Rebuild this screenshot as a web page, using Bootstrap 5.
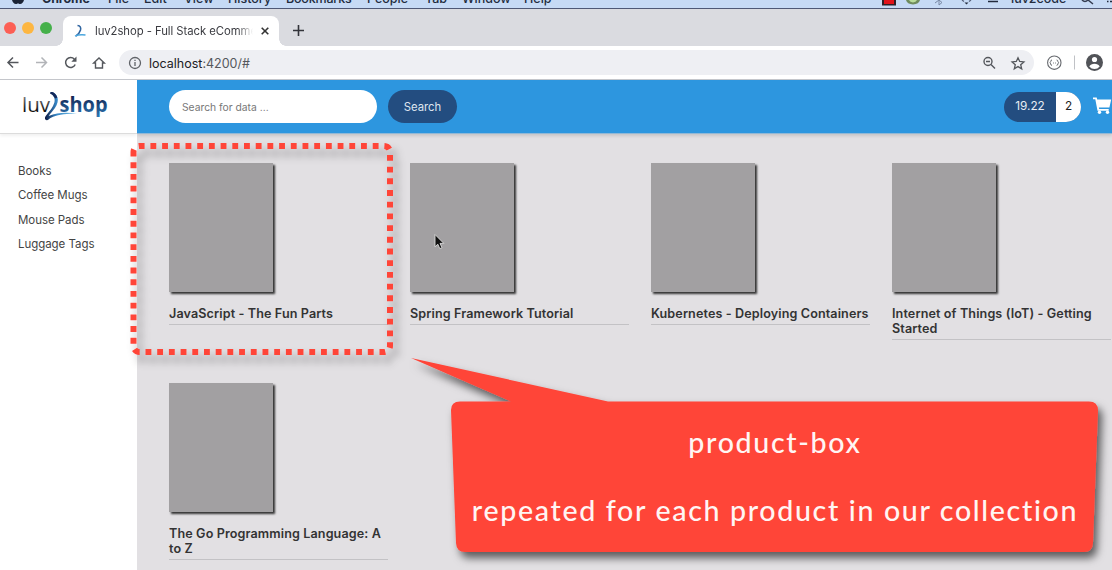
<!DOCTYPE html>
<html lang="en">
<head>
<meta charset="utf-8">
<title>luv2shop - Full Stack eCommerce</title>
<link href="https://cdn.jsdelivr.net/npm/bootstrap@5.3.0/dist/css/bootstrap.min.css" rel="stylesheet">
<style>
body{width:1112px;height:570px;overflow:hidden;font-family:Inter,"Liberation Sans",sans-serif;background:#fff;color:#333}
svg{display:block;flex:none}
.menu-strip{height:9px;background:#c6daf5;border-bottom:1px solid #4e5876;font-size:12.5px;font-weight:500;line-height:16px;color:#222b3d;padding-left:11px}
.menu-strip span{height:16px;margin-bottom:1px;white-space:nowrap;flex:none}
.w-chrome{width:66px;font-weight:700;letter-spacing:-.1px}.w-file{width:36px}.w-edit{width:40px}.w-view{width:44px}.w-history{width:58px}
.w-book{width:81px;letter-spacing:-.2px}.w-people{width:58px}.w-tab{width:37px}.w-window{width:62px}.w-help{width:357px}
.tab-strip{height:37px;background:#dadbe0;padding-left:4px}
.light{width:12px;height:12px;border-radius:50%;margin-right:6px;margin-top:1px}
.light-r{background:#fc5f55}.light-y{background:#fdb641}.light-g{background:#45b04a}
.tab-cur{height:30px;width:216px;background:#fff;border-radius:8px 8px 0 0;margin-left:5px;padding:0 8px 0 10px;font-size:11.3px;color:#3a3b40}
.tab-cur:before,.tab-cur:after{content:"";position:absolute;bottom:0;width:7px;height:7px}
.tab-cur:before{left:-7px;background:radial-gradient(circle at 0 0,transparent 6.5px,#fff 7px)}
.tab-cur:after{right:-7px;background:radial-gradient(circle at 100% 0,transparent 6.5px,#fff 7px)}
.tab-label{width:158px;overflow:hidden;white-space:nowrap;letter-spacing:-.05px;-webkit-mask-image:linear-gradient(90deg,#000 90%,transparent 100%)}
.tools{height:34px;border-bottom:1px solid #c4c6cb;padding-left:5px}
.address{width:915px;height:25px;border-radius:13px;background:#eeeff3;padding:0 8px 0 9px;font-size:12.5px;color:#55585d}
.address b{font-weight:400;color:#202124}
.shop{height:490px}
.side{width:137px}
.brand{height:54px;border-bottom:1px solid #dcdcdc;box-shadow:0 2px 3px rgba(0,0,0,.06);padding:10px 0 0 22px}
.cats{padding:25px 0 0 18px;font-size:11.5px;line-height:24.3px;color:#444;letter-spacing:-.05px}
.main{width:975px;background:#e2e0e3;overflow:hidden}
.topbar{height:54px;background:#2d96df;padding:0 0 0 32px;border-bottom:1px solid #92b8d6;box-shadow:0 2px 3px rgba(0,0,0,.12)}
.topbar .form-control{width:208px;height:33px;border:0;border-radius:17px;font-size:10.3px;padding:0 13px;color:#777}
.topbar .form-control::placeholder{color:#777;opacity:1}
.topbar .btn{width:69px;height:33px;border-radius:17px;background:#234d80;color:#dfe6ef;font-size:11.3px;padding:2px 0 0;margin-left:11px;border:0}
.total{height:30px;width:77px;border-radius:15px;overflow:hidden;font-size:11.8px;background:#234d80;color:#e8edf4}
.total .qty{width:25px;height:30px;background:#fff;color:#222}
.total .sum{width:52px}
.grid-area{width:964px;margin:29px 0 0 32px}
.product{height:220px;padding-right:22px}
.cover{width:104px;height:129px;background:#a2a0a2;box-shadow:2px 2px 2px #333}
.product h6{font-size:12.6px;line-height:15px;font-weight:600;letter-spacing:.11px;color:#333;margin:14px -4px 0 0;padding:0 0 3px}
.product h6:after{content:"";display:block;width:219px;height:1px;margin-top:3px;margin-bottom:-4px;background:#c3c2c5}
.note{left:451px;top:400px;width:648px;height:151px;color:#fff5f3;font-family:Lato,sans-serif;font-size:28.6px;font-weight:500;line-height:68px;padding-top:8px;letter-spacing:1.65px;white-space:nowrap}
.over{left:0;top:0}
</style>
</head>
<body class="position-relative">
<div class="menu-strip d-flex align-items-end overflow-hidden">
  <svg width="31" height="8" viewBox="0 0 31 8"><path d="M1 0h12c-.5 2-2 4-4 4-1 0-1-.5-2-.5S6 4 5 4C3 4 1.500 2 1 0z" fill="#1b2436"/></svg>
  <span class="w-chrome">Chrome</span><span class="w-file">File</span><span class="w-edit">Edit</span><span class="w-view">View</span><span class="w-history">History</span><span class="w-book">Bookmarks</span><span class="w-people">People</span><span class="w-tab">Tab</span><span class="w-window">Window</span><span class="w-help">Help</span>
  <svg width="130" height="8" viewBox="881 0 130 8"><path d="M882 0h14v5.500h-14z" fill="#302028"/><path d="M884 0h10v4h-10z" fill="#e2131b"/><path d="M906 0h14q-1 4-7 4.500-6-.5-7-4.500z" fill="#6f8b5d"/><path d="M909 0h8q-1 2-4 2.500-3-.5-4-2.500z" fill="#b9dc9a"/><path d="M935 3l4-3 3 2.500-3 2.500v-5" fill="none" stroke="#7888a4"/><path d="M962 0l2 1.500M971 0l-2 1.500" stroke="#55617a" stroke-width="1.200"/><path d="M964.500 2.500h4l-2 2z" fill="#222b3d"/><path d="M988 1.500h10" stroke="#222b3d" stroke-width="1.500"/></svg>
  <span>luv2code</span>
  <svg width="47" height="8" viewBox="1065 0 47 8"><path d="M1081 0q3 3 6 0M1087 0l5 4" fill="none" stroke="#343d51" stroke-width="1.500"/><path d="M1106 1.500h1.500M1109 1.500h3" stroke="#222b3d" stroke-width="1.500"/></svg>
</div>

<div class="tab-strip d-flex align-items-center">
  <div class="light light-r"></div><div class="light light-y"></div><div class="light light-g"></div>
  <div class="tab-cur d-flex align-items-center position-relative align-self-end">
    <svg width="22" height="16" viewBox="0 0 22 16"><path d="M4.500 2.500q4 .5 3 4.500Q6.500 10.500 3 13" fill="none" stroke="#2f64a0" stroke-width="1.600"/><path d="M2 13.200q4-2 10.500-1.200" fill="none" stroke="#4aa6de" stroke-width="1.300"/></svg>
    <div class="tab-label">luv2shop - Full Stack eCommerce</div>
    <svg class="ms-auto" width="12" height="12" viewBox="0 0 12 12"><path d="M2.700 2.700l6.600 6.600M9.300 2.700l-6.600 6.600" stroke="#333" stroke-width="1.600"/></svg>
  </div>
  <svg class="ms-2 mt-1" width="22" height="16" viewBox="0 0 22 16"><path d="M6 8.500h11M11.500 3v11" stroke="#33343a" stroke-width="1.600"/></svg>
</div>

<div class="tools d-flex align-items-center">
  <svg width="114" height="26" viewBox="5 50 114 26" fill="none" stroke="#54575c" stroke-width="1.500"><path d="M18.500 62.500H8M13 57.500l-5 5 5 5"/><path stroke="#b2b4b8" d="M36 62.500h10.500M41.500 57.500l5 5-5 5"/><path d="M75.200 64.500a5 5 0 1 1-.8-5.300"/><path fill="#54575c" stroke="none" d="M76.500 56.500v5.200h-5.200z"/><path d="M93.700 63l5.300-5 5.300 5h-1.800v5H95.500v-5z" stroke-width="1.400"/></svg>
  <div class="address d-flex align-items-center">
    <svg width="21" height="16" viewBox="0 0 21 16"><circle cx="7" cy="8" r="5.500" fill="none" stroke="#606368" stroke-width="1.300"/><path d="M7 7v4M7 4.700v1.300" stroke="#606368" stroke-width="1.300"/></svg>
    <div class="pt-1 lh-1"><b>localhost</b>:4200/#</div>
    <svg class="ms-auto" width="46" height="24" viewBox="980 50.500 46 24" fill="none" stroke="#54575c" stroke-width="1.400"><circle cx="988" cy="61" r="4"/><path d="M991 64l4 4M986 61h4"/><path d="M1018 57.300l1.700 3.700 4.200.4-3.200 2.800 1 4.100-3.700-2.200-3.700 2.200 1-4.100-3.200-2.800 4.200-.4z" stroke-width="1.300"/></svg>
  </div>
  <svg width="78" height="26" viewBox="1034 50 78 26"><circle cx="1054.300" cy="62.700" r="6.700" fill="none" stroke="#66696e" stroke-width="1.100"/><path d="M1052 60q-1.300 0-1.300 1.500l-.7 1.200.7 1.200q0 1.500 1.300 1.500M1056.600 60q1.300 0 1.300 1.500l.7 1.200-.7 1.200q0 1.500-1.300 1.500M1053 63h.8M1055 63h.8" fill="none" stroke="#66696e"/><path d="M1074.500 55.500v14" stroke="#c0c2c6"/><circle cx="1094.500" cy="62.500" r="8.500" fill="#515358"/><circle cx="1094.500" cy="59.500" r="2.600" fill="#fff"/><path d="M1089.300 66.500q1.500-2.800 5.200-2.800t5.200 2.800q-2 2.500-5.200 2.500t-5.200-2.500z" fill="#fff"/></svg>
</div>

<div class="shop d-flex">
  <aside class="side">
    <div class="brand">
      <svg width="88" height="34" viewBox="22 90 88 34">
        <defs><linearGradient id="ink" x2="0" y2="1"><stop stop-color="#aaa"/><stop offset=".75" stop-color="#111"/></linearGradient><linearGradient id="sea" x2="0" y2="1"><stop offset=".2" stop-color="#101f4c"/><stop offset="1" stop-color="#2d7bb9"/></linearGradient><linearGradient id="tail"><stop stop-color="#0c1740"/><stop offset=".35" stop-color="#3585c4"/><stop offset="1" stop-color="#75bfe8"/></linearGradient></defs>
        <text x="22" y="112" font-family="Open Sans" font-size="20.500" textLength="28" lengthAdjust="spacingAndGlyphs" fill="url(#ink)">luv</text>
        <text x="59.500" y="111.500" font-family="Open Sans" font-weight="700" font-size="20.500" textLength="48" lengthAdjust="spacingAndGlyphs" fill="url(#sea)">shop</text>
        <path d="M50 93.200q.8-1.900 3-.9c6.500 3.500 6.500 11-.2 18.500-1.600 2-3.100 3.600-4.100 5.200 9-3.500 18-3.800 28.300-2.200-12-.2-20 .8-26 4-1.500.8-2 1.700-4 2.500-3-.8-2.200-3.300-.5-5.300 3-4 6.500-7.500 7.900-12.500 1.100-4-1-7.800-4.400-9.300z" fill="url(#tail)"/>
        <path d="M50 93.200q.8-1.900 3-.9c2.200 1.200 3.700 3 4.300 5.200l-2 1q-1.800-3.800-5.300-5.300z" fill="#14285a"/>
      </svg>
    </div>
    <div class="cats d-flex flex-column"><span>Books</span><span>Coffee Mugs</span><span>Mouse Pads</span><span>Luggage Tags</span></div>
  </aside>
  <main class="main">
    <div class="topbar d-flex align-items-center">
      <input class="form-control" type="text" placeholder="Search for data ...">
      <button class="btn" type="button">Search</button>
      <div class="total d-flex align-items-center ms-auto"><span class="sum text-center">19.22</span><span class="qty d-flex align-items-center justify-content-center">2</span></div>
      <svg width="31" height="24" viewBox="1081 95 31 24"><path d="M1093 97.500h3.700l.5 2h14l-1.800 8h-10.500l.3 1.500h9.500v1.800h-11.200l-2.200-11.500h-2.300z" fill="#fff"/><circle cx="1099.500" cy="112.300" r="1.700" fill="#fff"/><circle cx="1107.500" cy="112.300" r="1.700" fill="#fff"/></svg>
    </div>
    <div class="grid-area row g-0">
      <div class="col-3 product"><div class="cover"></div><h6>JavaScript - The Fun Parts</h6></div>
      <div class="col-3 product"><div class="cover"></div><h6>Spring Framework Tutorial</h6></div>
      <div class="col-3 product"><div class="cover"></div><h6>Kubernetes - Deploying Containers</h6></div>
      <div class="col-3 product"><div class="cover"></div><h6>Internet of Things (IoT) - Getting Started</h6></div>
      <div class="col-3 product"><div class="cover"></div><h6>The Go Programming Language: A to Z</h6></div>
    </div>
  </main>
</div>

<svg class="over position-absolute" width="1112" height="570" viewBox="0 0 1112 570">
  <defs>
    <filter id="soft" x="-10%" y="-10%" width="125%" height="125%"><feDropShadow dx="5" dy="7" stdDeviation="4" flood-color="#000" flood-opacity=".4"/></filter>
    <filter id="cast" x="-10%" y="-10%" width="120%" height="130%"><feDropShadow dx="4" dy="6" stdDeviation="4" flood-color="#000" flood-opacity=".6"/></filter>
  </defs>
  <path filter="url(#soft)" d="M133.500 155.300V152a6 6 0 0 1 6-6H384a6 6 0 0 1 6 6V346a6 6 0 0 1-6 6H139.500a6 6 0 0 1-6-6z" fill="none" stroke="#ff4438" stroke-width="6" stroke-dasharray="5.850 5.850"/>
  <path filter="url(#cast)" d="M411 358L608 401.500H1089q9 0 9 9L1093 543q-.5 9-9 9H465q-8.500 0-9-9L451 410q0-8.500 9-8.500H511z" fill="#ff4438"/>
  <path d="M435 234.500v12.300l2.800-2.600 2 4.500 2.200-1-2-4.300h3.800z" fill="#111" stroke="#ddd" stroke-width=".9"/>
</svg>
<div class="note position-absolute text-center"><div>product-box</div><div>repeated for each product in our collection</div></div>
<script src="https://cdn.jsdelivr.net/npm/bootstrap@5.3.0/dist/js/bootstrap.bundle.min.js"></script>
</body>
</html>
